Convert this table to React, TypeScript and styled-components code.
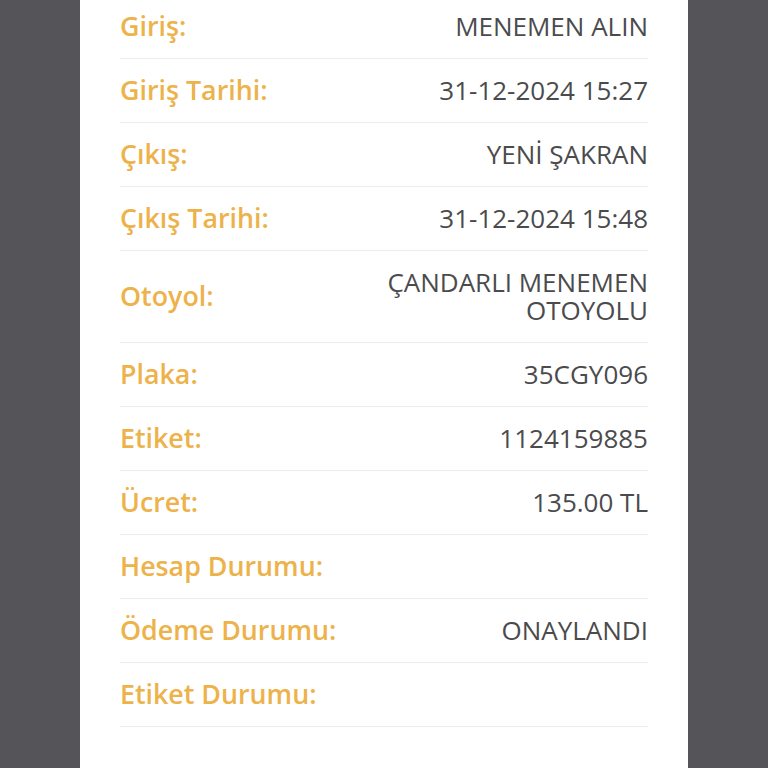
import React from "react";
import styled, { createGlobalStyle } from "styled-components";

const Global = createGlobalStyle`
  html, body { margin: 0; padding: 0; background: #555459; overflow: hidden; }
  body { font-family: "Open Sans", "Noto Sans", sans-serif; }
`;

const Page = styled.div`
  width: 768px;
  height: 768px;
  background: #555459;
  display: flex;
  justify-content: center;
  overflow: hidden;
`;

const Card = styled.div`
  width: 608px;
  margin-top: -5px;
  background: #ffffff;
  padding: 0 40px 60px;
  box-sizing: border-box;
  display: flex;
  flex-direction: column;
`;

const Row = styled.div`
  display: flex;
  justify-content: space-between;
  align-items: center;
  padding: 17px 0 18px;
  border-bottom: 1px solid #ececec;
  line-height: 28px;
`;

const Label = styled.div`
  color: #edb24a;
  font-size: 26.8px;
  font-weight: 600;
  white-space: nowrap;
`;

const Value = styled.div`
  color: #4b4b4d;
  font-size: 26px;
  font-weight: 400;
  text-align: right;
  max-width: 290px;
`;

const rows: [string, string][] = [
  ["Giriş:", "MENEMEN ALIN"],
  ["Giriş Tarihi:", "31-12-2024 15:27"],
  ["Çıkış:", "YENİ ŞAKRAN"],
  ["Çıkış Tarihi:", "31-12-2024 15:48"],
  ["Otoyol:", "ÇANDARLI MENEMEN OTOYOLU"],
  ["Plaka:", "35CGY096"],
  ["Etiket:", "1124159885"],
  ["Ücret:", "135.00 TL"],
  ["Hesap Durumu:", ""],
  ["Ödeme Durumu:", "ONAYLANDI"],
  ["Etiket Durumu:", ""],
];

export default function App() {
  return (
    <Page>
      <Global />
      <Card>
        {rows.map(([l, v]) => (
          <Row key={l}>
            <Label>{l}</Label>
            <Value>{v}</Value>
          </Row>
        ))}
      </Card>
    </Page>
  );
}
